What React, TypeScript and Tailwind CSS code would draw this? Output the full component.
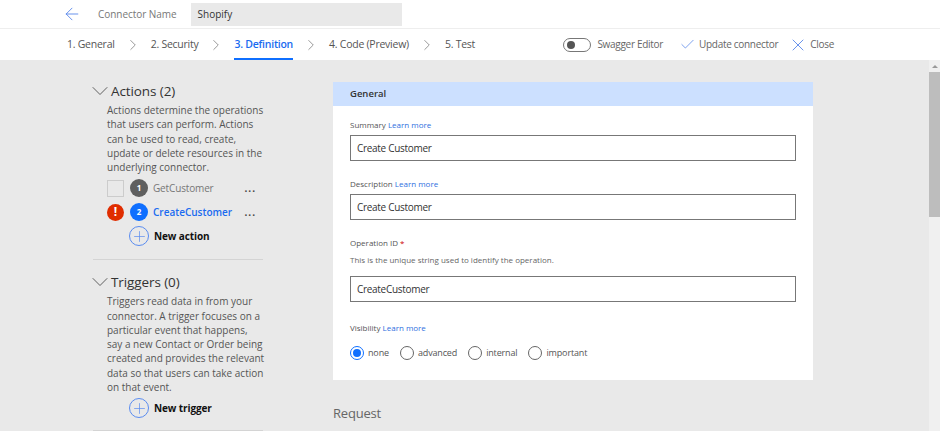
import { ArrowLeft, Check, ChevronDown, ChevronRight, Plus, X } from "lucide-react";

const steps = ["1. General", "2. Security", "3. Definition", "4. Code (Preview)", "5. Test"];

const actionsText = [
  "Actions determine the operations",
  "that users can perform. Actions",
  "can be used to read, create,",
  "update or delete resources in the",
  "underlying connector.",
];

const triggersText = [
  "Triggers read data in from your",
  "connector. A trigger focuses on a",
  "particular event that happens,",
  "say a new Contact or Order being",
  "created and provides the relevant",
  "data so that users can take action",
  "on that event.",
];

function Stepper() {
  return (
    <div className="flex h-full items-center pl-[67px] text-[10.5px] tracking-[-0.25px] text-[#555]">
      {steps.map((step, i) => (
        <div key={step} className="flex h-full items-center">
          <span
            className={
              i === 2
                ? "flex h-full items-center border-b-[2px] border-[#0f6fff] pt-[2px] font-semibold text-[#1a6bf0]"
                : "flex h-full items-center"
            }
          >
            {step}
          </span>
          {i < steps.length - 1 && (
            <ChevronRight className="mx-[9px] h-[18px] w-[18px] text-[#777]" strokeWidth={1} />
          )}
        </div>
      ))}
    </div>
  );
}

function SectionHead({ title }: { title: string }) {
  return (
    <div className="flex h-[20px] items-center text-[13.5px] leading-[20px] tracking-[-0.1px] text-[#333]">
      <ChevronDown className="-ml-[7px] -mr-[3px] h-[28px] w-[28px] text-[#555]" strokeWidth={0.8} />
      <span>{title}</span>
    </div>
  );
}

function Description({ lines }: { lines: string[] }) {
  return (
    <div className="mt-[2px] whitespace-nowrap pl-[14px] text-[10px] leading-[14.25px] text-[#555]">
      {lines.map((line) => (
        <div key={line}>{line}</div>
      ))}
    </div>
  );
}

function AddRow({ label }: { label: string }) {
  return (
    <div className="flex items-center gap-[5px] pl-[36px]">
      <span className="flex h-[20px] w-[20px] items-center justify-center rounded-full border border-[#5a8cf0]">
        <Plus className="h-[17px] w-[17px] text-[#5a8cf0]" strokeWidth={1} />
      </span>
      <span className="text-[10px] font-bold tracking-[-0.1px] text-[#111]">{label}</span>
    </div>
  );
}

function Field({ label, value }: { label: string; value: string }) {
  return (
    <div>
      <div className="text-[8px] leading-[12px] text-[#555]">
        {label} <span className="text-[#2f6fe0]">Learn more</span>
      </div>
      <div className="mt-[4px] flex h-[26px] items-center border border-[#777] px-[6px] text-[10px] tracking-[-0.3px] text-[#333]">
        {value}
      </div>
    </div>
  );
}

function Radio({ label, checked }: { label: string; checked?: boolean }) {
  return (
    <div className="flex items-center gap-[4px] text-[9px] tracking-[-0.15px] text-[#555]">
      <span
        className={
          checked
            ? "flex h-[14px] w-[14px] items-center justify-center rounded-full border border-[#0f6fff]"
            : "h-[14px] w-[14px] rounded-full border border-[#666]"
        }
      >
        {checked && <span className="h-[8px] w-[8px] rounded-full bg-[#0f6fff]" />}
      </span>
      {label}
    </div>
  );
}

export default function App() {
  return (
    <div className="flex h-[431px] w-[940px] flex-col overflow-hidden bg-white font-['Open_Sans',sans-serif]">
      <div className="flex h-[29px] shrink-0 items-center border-b border-[#eee] pl-[62px]">
        <ArrowLeft className="h-[20px] w-[20px] text-[#4a7de8]" strokeWidth={1} />
        <span className="ml-[16px] text-[10px] tracking-[-0.05px] text-[#777]">Connector Name</span>
        <div className="ml-[14px] flex h-[23px] w-[211px] items-center bg-[#e9e9e9] px-[7px] text-[10px] text-[#333]">
          Shopify
        </div>
      </div>

      <div className="flex h-[31px] shrink-0 items-center justify-between pr-[106px]">
        <Stepper />
        <div className="flex items-center text-[10px] tracking-[-0.3px] text-[#666]">
          <span className="flex h-[14px] w-[28px] items-center rounded-full border border-[#777] pl-[3px]">
            <span className="h-[8px] w-[8px] rounded-full bg-[#555]" />
          </span>
          <span className="ml-[6px]">Swagger Editor</span>
          <Check className="ml-[16px] h-[17px] w-[17px] text-[#4a7de8]" strokeWidth={1} />
          <span className="ml-[3px]">Update connector</span>
          <X className="ml-[10px] h-[20px] w-[20px] text-[#4a7de8]" strokeWidth={1} />
          <span className="ml-[2px]">Close</span>
        </div>
      </div>

      <div className="flex min-h-0 flex-1 bg-[#e9e9e9]">
        <div className="flex min-w-0 flex-1 overflow-hidden">
          <aside className="ml-[93px] w-[170px] shrink-0 pt-[21px]">
            <SectionHead title="Actions (2)" />
            <Description lines={actionsText} />
            <div className="mt-[5px] flex h-[18px] items-center pl-[14px] text-[10px] tracking-[-0.15px] text-[#777]">
              <span className="h-[17px] w-[17px] border border-[#ccc]" />
              <span className="ml-[6px] flex h-[18px] w-[18px] items-center justify-center rounded-full bg-[#5f5f5f] text-[8px] font-bold text-white">
                1
              </span>
              <span className="ml-[5px]">GetCustomer</span>
              <span className="ml-auto pr-[7px] font-bold tracking-[1px] text-[#444]">...</span>
            </div>
            <div className="mt-[6px] flex h-[18px] items-center pl-[14px] text-[10px]">
              <span className="flex h-[17px] w-[17px] items-center justify-center rounded-full bg-[#e02d00] text-[12px] font-bold text-white">
                !
              </span>
              <span className="ml-[6px] flex h-[18px] w-[18px] items-center justify-center rounded-full bg-[#0f6fff] text-[8px] font-bold text-white">
                2
              </span>
              <span className="ml-[5px] font-semibold text-[#1a6bf0]">CreateCustomer</span>
              <span className="ml-auto pr-[7px] font-bold tracking-[1px] text-[#444]">...</span>
            </div>
            <div className="mt-[5px]">
              <AddRow label="New action" />
            </div>
            <div className="mt-[13px] border-t border-[#d4d4d4] pt-[12px]">
              <SectionHead title="Triggers (0)" />
              <Description lines={triggersText} />
              <div className="mt-[4px]">
                <AddRow label="New trigger" />
              </div>
              <div className="mt-[12px] border-t border-[#d4d4d4]" />
            </div>
          </aside>

          <main className="ml-[70px] w-[480px] shrink-0 pt-[22px]">
            <div className="bg-white">
              <div className="flex h-[24px] items-center bg-[#cce0ff] px-[17px] text-[9.5px] font-semibold text-[#333]">
                General
              </div>
              <div className="px-[17px] pb-[20px] pt-[13px]">
                <Field label="Summary" value="Create Customer" />
                <div className="mt-[17px]">
                  <Field label="Description" value="Create Customer" />
                </div>
                <div className="mt-[17px] text-[8px] leading-[12px] text-[#555]">
                  Operation ID <span className="text-[#c00]">*</span>
                </div>
                <div className="mt-[5px] text-[8px] leading-[12px] text-[#666]">
                  This is the unique string used to identify the operation.
                </div>
                <div className="mt-[10px] flex h-[26px] items-center border border-[#777] px-[6px] text-[10px] tracking-[-0.3px] text-[#333]">
                  CreateCustomer
                </div>
                <div className="mt-[20px] text-[8px] leading-[12px] text-[#555]">
                  Visibility <span className="text-[#2f6fe0]">Learn more</span>
                </div>
                <div className="mt-[12px] flex gap-[11px]">
                  <Radio label="none" checked />
                  <Radio label="advanced" />
                  <Radio label="internal" />
                  <Radio label="important" />
                </div>
              </div>
            </div>
            <h2 className="mt-[24px] text-[13px] tracking-[-0.2px] text-[#666]">Request</h2>
          </main>
        </div>

        <div className="flex w-[11px] shrink-0 flex-col bg-[#f0f0f0]">
          <div className="flex h-[12px] items-center justify-center">
            <span className="h-0 w-0 border-x-[3px] border-b-[3px] border-x-transparent border-b-[#999]" />
          </div>
          <div className="h-[145px] bg-[#bdbdbd]" />
        </div>
      </div>
    </div>
  );
}
